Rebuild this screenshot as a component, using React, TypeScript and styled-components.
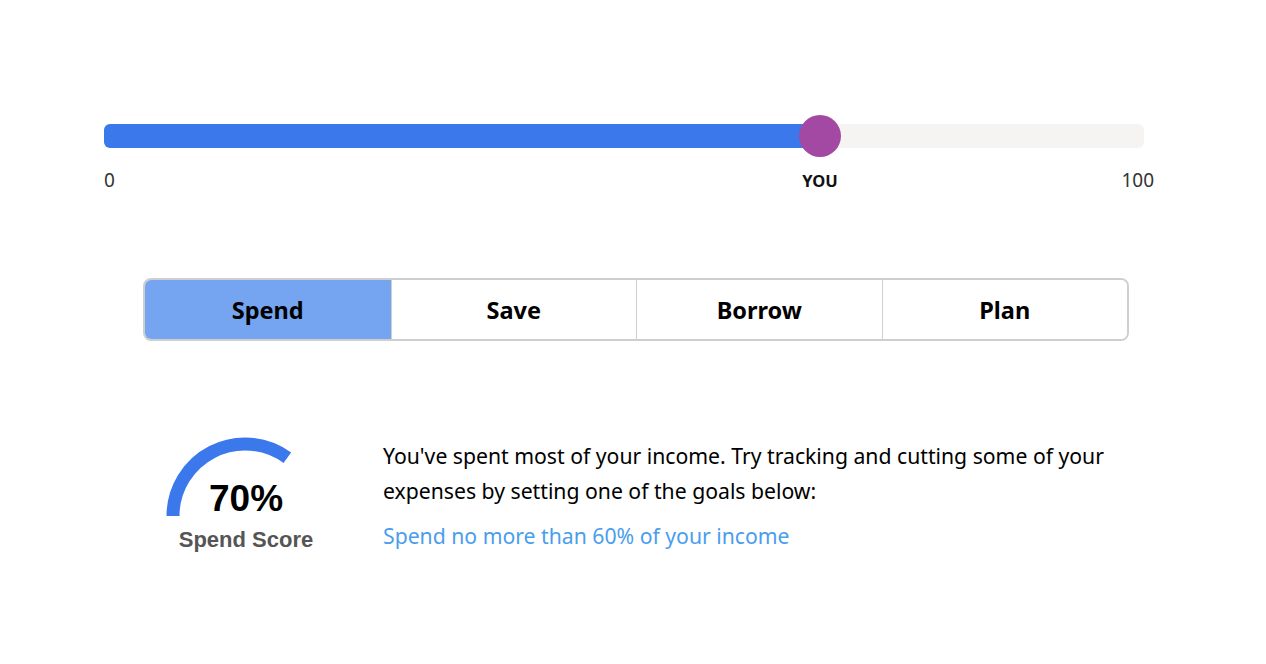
import { useState } from 'react';
import styled, { createGlobalStyle } from 'styled-components';

const GlobalStyle = createGlobalStyle`
  html, body {
    margin: 0;
    padding: 0;
    background: #ffffff;
  }
  body {
    font-family: 'Noto Sans', 'Open Sans', sans-serif;
    color: #111;
  }
`;

const colors = {
  blue: '#3b78ec',
  track: '#f5f4f2',
  thumb: '#a349a4',
  tabActive: '#75a5f0',
  border: '#cfcfcf',
  link: '#4a9ded',
};

const Page = styled.div`
  width: 1266px;
  height: 664px;
  overflow: hidden;
  display: flex;
  flex-direction: column;
`;

const SliderSection = styled.div`
  margin: 115px 0 0 104px;
  width: 1050px;
`;

const SliderRow = styled.div`
  position: relative;
  width: 1040px;
  height: 42px;
  display: flex;
  align-items: center;
`;

const Track = styled.div`
  width: 100%;
  height: 24px;
  border-radius: 6px;
  background: ${colors.track};
  overflow: hidden;
`;

const Fill = styled.div`
  height: 100%;
  background: ${colors.blue};
`;

const Thumb = styled.div`
  position: absolute;
  top: 0;
  width: 42px;
  height: 42px;
  margin-left: -21px;
  border-radius: 50%;
  background: ${colors.thumb};
`;

const Labels = styled.div`
  position: relative;
  display: flex;
  justify-content: space-between;
  height: 30px;
  margin-top: 10px;
  font-size: 19px;
  color: #333;
`;

const YouLabel = styled.span`
  position: absolute;
  top: 2px;
  transform: translateX(-50%);
  font-weight: 700;
  font-size: 16.5px;
  color: #111;
`;

const Tabs = styled.div`
  margin: 81px 0 0 143px;
  width: 982px;
  height: 59px;
  display: grid;
  grid-template-columns: repeat(4, 1fr);
  border: 2px solid ${colors.border};
  border-radius: 8px;
  overflow: hidden;
`;

const Tab = styled.button<{ $active?: boolean }>`
  border: none;
  border-left: 1px solid ${colors.border};
  &:first-child {
    border-left: none;
  }
  background: ${({ $active }) => ($active ? colors.tabActive : '#fff')};
  font-family: 'Noto Sans', 'Open Sans', sans-serif;
  font-weight: 700;
  font-size: 23.5px;
  color: #000;
  cursor: pointer;
  padding: 0;
`;

const ScoreSection = styled.div`
  margin: 96px 0 0 165px;
  display: flex;
  gap: 56px;
`;

const Gauge = styled.div`
  width: 162px;
  display: flex;
  flex-direction: column;
  align-items: center;
  position: relative;
`;

const GaugeValue = styled.div`
  position: absolute;
  top: 41px;
  left: 0;
  right: 0;
  text-align: center;
  font-family: 'Liberation Sans', Arial, sans-serif;
  font-weight: 700;
  font-size: 37px;
  color: #000;
`;

const GaugeLabel = styled.div`
  margin-top: 10px;
  font-family: 'Liberation Sans', Arial, sans-serif;
  font-weight: 700;
  font-size: 22px;
  color: #555;
`;

const Advice = styled.div`
  padding-top: 1px;
  width: 760px;
`;

const AdviceText = styled.p`
  margin: 0;
  font-size: 21.2px;
  line-height: 35px;
  color: #000;
`;

const GoalLink = styled.a`
  display: block;
  margin-top: 13px;
  font-size: 21.2px;
  line-height: 30px;
  color: ${colors.link};
  text-decoration: none;
`;

const ScoreArc = ({ pct }: { pct: number }) => {
  const cx = 80;
  const cy = 79;
  const r = 72;
  const a = Math.PI - (pct / 100) * Math.PI;
  const x = cx + r * Math.cos(a);
  const y = cy - r * Math.sin(a);
  return (
    <svg width="162" height="80" viewBox="0 0 162 80">
      <path
        d={`M ${cx - r} ${cy} A ${r} ${r} 0 0 1 ${x.toFixed(2)} ${y.toFixed(2)}`}
        fill="none"
        stroke={colors.blue}
        strokeWidth="13"
      />
    </svg>
  );
};

const tabs = ['Spend', 'Save', 'Borrow', 'Plan'];

export default function App() {
  const [active, setActive] = useState(0);
  const position = 68.85;
  const score = 70;

  return (
    <>
      <GlobalStyle />
      <Page>
        <SliderSection>
          <SliderRow>
            <Track>
              <Fill style={{ width: `${position}%` }} />
            </Track>
            <Thumb style={{ left: `${position}%` }} />
          </SliderRow>
          <Labels>
            <span>0</span>
            <YouLabel style={{ left: `${(position * 1040) / 1050}%` }}>YOU</YouLabel>
            <span>100</span>
          </Labels>
        </SliderSection>

        <Tabs>
          {tabs.map((t, i) => (
            <Tab key={t} $active={i === active} onClick={() => setActive(i)}>
              {t}
            </Tab>
          ))}
        </Tabs>

        <ScoreSection>
          <Gauge>
            <ScoreArc pct={score} />
            <GaugeValue>{score}%</GaugeValue>
            <GaugeLabel>Spend Score</GaugeLabel>
          </Gauge>
          <Advice>
            <AdviceText>
              You've spent most of your income. Try tracking and cutting some of your
              expenses by setting one of the goals below:
            </AdviceText>
            <GoalLink href="#">Spend no more than 60% of your income</GoalLink>
          </Advice>
        </ScoreSection>
      </Page>
    </>
  );
}
